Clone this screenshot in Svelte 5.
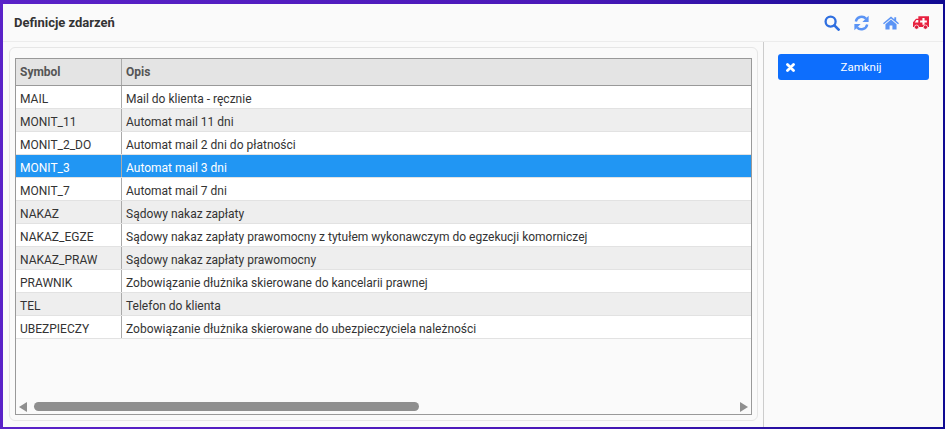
<script lang="ts">
  // Event definitions dialog: a table of symbols on the left, actions on the right.
  const rows = [
    { symbol: 'MAIL', opis: 'Mail do klienta - ręcznie' },
    { symbol: 'MONIT_11', opis: 'Automat mail 11 dni' },
    { symbol: 'MONIT_2_DO', opis: 'Automat mail 2 dni do płatności' },
    { symbol: 'MONIT_3', opis: 'Automat mail 3 dni', selected: true },
    { symbol: 'MONIT_7', opis: 'Automat mail 7 dni' },
    { symbol: 'NAKAZ', opis: 'Sądowy nakaz zapłaty' },
    { symbol: 'NAKAZ_EGZE', opis: 'Sądowy nakaz zapłaty prawomocny z tytułem wykonawczym do egzekucji komorniczej' },
    { symbol: 'NAKAZ_PRAW', opis: 'Sądowy nakaz zapłaty prawomocny' },
    { symbol: 'PRAWNIK', opis: 'Zobowiązanie dłużnika skierowane do kancelarii prawnej' },
    { symbol: 'TEL', opis: 'Telefon do klienta' },
    { symbol: 'UBEZPIECZY', opis: 'Zobowiązanie dłużnika skierowane do ubezpieczyciela należności' },
  ];
</script>

<div class="frame">
  <div class="window">
    <header>
      <h1>Definicje zdarzeń</h1>
      <div class="tools">
        <svg width="16" height="16" viewBox="0 0 16 16" fill="none">
          <circle cx="6.6" cy="6.6" r="5" stroke="#2f6fe0" stroke-width="2.3" />
          <path d="M10.4 10.4 14.6 14.6" stroke="#2f6fe0" stroke-width="2.7" stroke-linecap="round" />
        </svg>
        <svg width="15" height="16" viewBox="0 0 15 16" fill="none">
          <path d="M1.8 6.6A6 6 0 0 1 12 3.6" stroke="#5b94f5" stroke-width="2.4" />
          <path d="M14.6 0.8V7H8.4Z" fill="#5b94f5" />
          <path d="M13.2 9.4A6 6 0 0 1 3 12.4" stroke="#5b94f5" stroke-width="2.4" />
          <path d="M0.4 15.2V9H6.6Z" fill="#5b94f5" />
        </svg>
        <svg width="16" height="14" viewBox="0 0 17 14">
          <path d="M8.5 0 0 7.2 1 8.4 8.5 2.2 16 8.4 17 7.2 14 4.6V1H12V2.9Z" fill="#5b94f5" />
          <path d="M8.5 3.4 2.6 8.3V14H7V9.6H10V14H14.4V8.3Z" fill="#5b94f5" />
        </svg>
        <svg width="16" height="14" viewBox="0 0 18 15">
          <path d="M6 0H18V12H0V6.6L3.4 2.6H6Z" fill="#e8213f" />
          <path d="M3.9 4H6V6.8H2Z" fill="#fff" />
          <path d="M10.6 2H13V4.6H15.6V7H13V9.6H10.6V7H8V4.6H10.6Z" fill="#fff" />
          <circle cx="4" cy="12.2" r="2.4" fill="#d81c3a" stroke="#fff" stroke-width="0.8" />
          <circle cx="14" cy="12.2" r="2.4" fill="#d81c3a" stroke="#fff" stroke-width="0.8" />
        </svg>
      </div>
    </header>

    <div class="body">
      <main>
        <div class="panel">
          <div class="grid">
            <div class="rows">
              <div class="row head">
                <div class="col-symbol">Symbol</div>
                <div class="col-opis">Opis</div>
              </div>
              {#each rows as row, i}
                <div class="row" class:odd={i % 2 === 1} class:selected={row.selected}>
                  <div class="col-symbol">{row.symbol}</div>
                  <div class="col-opis">{row.opis}</div>
                </div>
              {/each}
            </div>
            <div class="scrollbar">
              <span class="arrow left"></span>
              <div class="track"><div class="thumb"></div></div>
              <span class="arrow right"></span>
            </div>
          </div>
        </div>
      </main>

      <aside>
        <button type="button">
          <svg class="x" width="9" height="9" viewBox="0 0 9 9">
            <path d="M1.5 1.5 7.5 7.5M7.5 1.5 1.5 7.5" stroke="#fff" stroke-width="2.8" stroke-linecap="round" />
          </svg>
          Zamknij
        </button>
      </aside>
    </div>
  </div>
</div>

<style>
  :global(body) {
    margin: 0;
  }
  .frame {
    box-sizing: border-box;
    width: 945px;
    height: 429px;
    padding: 4px 2px 2px 3px;
    background: linear-gradient(90deg, #5a22c8 0%, #4a18b8 60%, #0f0a92 100%);
    font-family: Roboto, sans-serif;
    color: #333;
  }
  .window {
    display: flex;
    flex-direction: column;
    height: 100%;
    background: #fafafa;
  }
  header {
    display: flex;
    align-items: center;
    justify-content: space-between;
    box-sizing: border-box;
    height: 38px;
    padding: 0 14px 0 11px;
    border-bottom: 1px solid #ececec;
  }
  h1 {
    margin: 0;
    font-size: 13px;
    font-weight: 700;
    color: #333;
  }
  .tools {
    display: flex;
    align-items: center;
    gap: 14px;
  }
  .body {
    flex: 1;
    display: flex;
    min-height: 0;
  }
  main {
    box-sizing: border-box;
    width: 760px;
    padding: 5px 5px 6px 6px;
  }
  .panel {
    box-sizing: border-box;
    height: 100%;
    padding: 10px 5px 5px 5px;
    border: 1px solid #e6e6e6;
    border-radius: 6px;
  }
  .grid {
    display: flex;
    flex-direction: column;
    box-sizing: border-box;
    height: 100%;
    border: 1px solid #999;
  }
  .rows {
    flex: 1;
    min-height: 0;
  }
  .row {
    display: flex;
    box-sizing: border-box;
    height: 23px;
    padding-top: 3px;
    background: #fff;
    border-bottom: 1px solid #e2e2e2;
    font-size: 12px;
    line-height: 20px;
    color: #333;
  }
  .row.odd {
    background: #eee;
  }
  .row.head {
    height: 27px;
    padding-top: 0;
    background: #e4e4e4;
    border-bottom: 1px solid #999;
    font-weight: 700;
    line-height: 26px;
    color: #555;
  }
  .row.selected {
    background: #2196f3;
    color: #fff;
  }
  .col-symbol {
    box-sizing: border-box;
    width: 106px;
    padding-left: 4px;
    border-right: 1px solid #aaa;
  }
  .row:not(.head) .col-symbol {
    margin-top: -3px;
    padding-top: 3px;
  }
  .col-opis {
    flex: 1;
    padding-left: 4px;
    white-space: nowrap;
  }
  .scrollbar {
    display: flex;
    align-items: center;
    height: 15px;
    padding: 0 3px;
  }
  .track {
    flex: 1;
    padding: 0 7px;
  }
  .thumb {
    width: 385px;
    height: 9px;
    border-radius: 5px;
    background: #8f8f8f;
  }
  .arrow {
    width: 0;
    height: 0;
    border-top: 5px solid transparent;
    border-bottom: 5px solid transparent;
  }
  .arrow.left {
    border-right: 8px solid #8f8f8f;
  }
  .arrow.right {
    border-left: 8px solid #8f8f8f;
  }
  aside {
    flex: 1;
    box-sizing: border-box;
    padding: 12px 14px 0 14px;
    border-left: 1px solid #ccc;
  }
  button {
    position: relative;
    display: block;
    width: 100%;
    height: 26px;
    padding: 0 0 1px 15px;
    border: 0;
    border-radius: 3px;
    background: #0d6efd;
    color: #fff;
    font-family: Roboto, sans-serif;
    font-size: 11.5px;
    font-weight: 400;
    text-align: center;
  }
  .x {
    position: absolute;
    left: 8px;
    top: 9px;
  }
</style>
